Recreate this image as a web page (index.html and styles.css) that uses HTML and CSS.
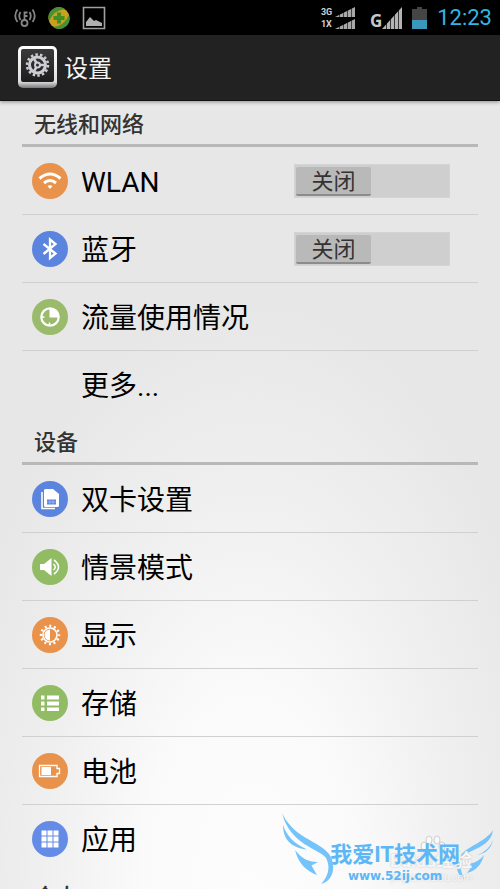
FILE: index.html
```html
<!DOCTYPE html>
<html lang="zh-CN">
<head>
<meta charset="utf-8">
<meta name="viewport" content="width=device-width, initial-scale=1">
<title>设置</title>
<link rel="stylesheet" href="styles.css">
</head>
<body>
<div class="status">
  <div class="status-group">
    <svg width="22" height="22" viewBox="0 0 22 22" fill="none" stroke="#858585" stroke-width="1.800"><circle cx="10.500" cy="16" r="3"/><path d="M10.500 13V5.500h3M10.500 9h3M6.500 5Q4 9 6.500 13M15.500 5Q18 9 15.500 13M3.500 2.500Q-1 9 3.500 15M18.500 2.500Q23 9 18.500 15"/></svg>
    <svg width="22" height="22" viewBox="0 0 22 22"><circle cx="11" cy="11" r="10.500" fill="#c9a11c"/><path d="M1 14A10.500 10.500 0 0 1 17 2Q6 3 1 14zM21 8A10.500 10.500 0 0 1 5 20Q16 19 21 8z" fill="#4a8f34"/><path d="M9 5.500h4V9h3.500v4H13v3.500H9V13H5.500V9H9z" fill="#3f8f25"/></svg>
    <svg width="24" height="24" viewBox="0 0 24 24"><path d="M1.500 1.500h21v21h-21z" fill="none" stroke="#a0a0a0" stroke-width="1.600"/><path d="M4 20v-4l4-5 4 4 2-1 6 3v3z" fill="#b0b0b0"/></svg>
  </div>
  <div class="status-group status-right">
    <div class="dual">
      <div class="net"><span>3G</span><svg width="20" height="10" viewBox="0 0 20 10"><path d="M0 10L20 0v10z" fill="#a8a8a8"/><path d="M4.500 0v10M8.500 0v10M12.500 0v10M16.500 0v10" stroke="#000" stroke-width=".6"/></svg></div>
      <div class="net"><span>1X</span><svg width="20" height="10" viewBox="0 0 20 10"><path d="M0 10L20 0v10z" fill="#a8a8a8"/><path d="M4.500 0v10M8.500 0v10M12.500 0v10M16.500 0v10" stroke="#000" stroke-width=".6"/></svg></div>
    </div>
    <div class="gsm"><span>G</span><svg width="20" height="22" viewBox="0 0 20 22"><path d="M0 22L20 0v22z" fill="#b4b4b4"/><path d="M4.500 0v22M8.500 0v22M12.500 0v22M16.500 0v22" stroke="#000" stroke-width=".7"/></svg></div>
    <svg width="15" height="22" viewBox="0 0 15 22"><path d="M5 0h5v2h5v20H0V2h5z" fill="#454545"/><path d="M0 13h15v9H0z" fill="#3a98bd"/></svg>
    <time class="clock">12:23</time>
  </div>
</div>
<header class="bar">
  <svg width="40" height="42" viewBox="0 0 40 42">
    <defs><linearGradient id="rim" x2="0" y2="1"><stop offset="0" stop-color="#fff"/><stop offset=".85" stop-color="#dedee0"/><stop offset="1" stop-color="#77777a"/></linearGradient><linearGradient id="face" x2="0" y2="1"><stop offset="0" stop-color="#3a3a3a"/><stop offset="1" stop-color="#1c1c1c"/></linearGradient></defs>
    <rect width="39" height="42" rx="5" fill="url(#rim)"/><rect x="3" y="3" width="33" height="33" rx="2" fill="url(#face)"/>
    <g transform="translate(19.500 19)" fill="none" stroke="#cdcdd3"><circle r="8" stroke-width="3"/><circle r="10.500" stroke-width="2.500" stroke-dasharray="2.500 2.200"/><circle r="2.500" stroke-width="2"/><path d="M2 0h6M-1 2l-3 5M-1-2l-3-5" stroke-width="2.500"/></g>
  </svg>
  <h1>设置</h1>
</header>
<main class="list">
  <section>
    <h2>无线和网络</h2>
    <ul>
      <li><svg class="ico orange" viewBox="0 0 36 36"><g fill="none" stroke="#fff" stroke-width="3"><path d="M7.500 15.500Q18 6.500 28.500 15.500M12 20Q18 15 24 20"/></g><path d="M15.500 23q2.500-1.500 5 0L18 26z" fill="#fff"/></svg><span class="name" id="wlan">WLAN</span><button class="switch" role="switch" aria-checked="false" aria-labelledby="wlan"><span>关闭</span></button></li>
      <li><svg class="ico blue" viewBox="0 0 36 36"><path d="M11.500 13L23.500 22.500 18 27V8.500l5.500 4.500L11.500 23" fill="none" stroke="#fff" stroke-width="2.300"/></svg><span class="name" id="bt">蓝牙</span><button class="switch" role="switch" aria-checked="false" aria-labelledby="bt"><span>关闭</span></button></li>
      <li><svg class="ico lime" viewBox="0 0 36 36"><circle cx="18" cy="18" r="8.700" fill="none" stroke="#fff" stroke-width="2.200"/><path d="M17.500 18.500V9.500a8.500 8.500 0 0 1 9 9z" fill="#fff"/><path d="M10 18h2.500M17.500 26v-2.500" stroke="#fff" stroke-width="1.500"/></svg><span class="name">流量使用情况</span></li>
      <li><span class="ico"></span><span class="name">更多...</span></li>
    </ul>
  </section>
  <section>
    <h2>设备</h2>
    <ul>
      <li><svg class="ico blue" viewBox="0 0 36 36"><path d="M10 11v16.500h13" fill="none" stroke="#fff" stroke-width="1.600"/><path d="M12 9.500q0-1.500 1.500-1.500H21l6 5v11.500q0 1.500-1.500 1.500h-12q-1.500 0-1.500-1.500z" fill="#fff"/><path d="M15 18.500h9v5h-9z" fill="#5b84df"/><path d="M15 21h9M18 18.500v5M21 18.500v5" stroke="#b9cbf4" stroke-width=".6"/></svg><span class="name">双卡设置</span></li>
      <li><svg class="ico green" viewBox="0 0 36 36"><path d="M8 15h4l7.500-6v18L12 21H8z" fill="#fff"/><path d="M21.500 15q3.500 3 0 6M22 11q9 7 0 14" fill="none" stroke="#fff" stroke-width="1.600"/></svg><span class="name">情景模式</span></li>
      <li><svg class="ico orange" viewBox="0 0 36 36"><circle cx="18" cy="18" r="7" fill="none" stroke="#fff" stroke-width="1.600"/><circle cx="18" cy="18" r="9" fill="none" stroke="#fff" stroke-width="2.500" stroke-dasharray="2 2.712" stroke-dashoffset="1"/><path d="M18 12.500a5.500 5.500 0 0 0 0 11z" fill="#fff"/></svg><span class="name">显示</span></li>
      <li><svg class="ico green" viewBox="0 0 36 36"><path d="M9 10.500h3.500v4H9zM15 10.500h12v4H15zM9 16.500h3.500v4H9zM15 16.500h12v4H15zM9 22.500h3.500v3.500H9zM15 22.500h12V26H15z" fill="#fff"/></svg><span class="name">存储</span></li>
      <li><svg class="ico orange" viewBox="0 0 36 36"><path d="M7.500 12.500h17.500v3h2.500v5H25v3H7.500z" fill="none" stroke="#fff" stroke-width="1.300"/><path d="M9.500 14h9.500v8H9.500z" fill="#fff"/></svg><span class="name">电池</span></li>
      <li><svg class="ico sky" viewBox="0 0 36 36"><path d="M9.500 9.500h5v5h-5zM15.500 9.500h5v5h-5zM21.500 9.500h5v5h-5zM9.500 15.500h5v5h-5zM15.500 15.500h5v5h-5zM21.500 15.500h5v5h-5zM9.500 21.500h5v5h-5zM15.500 21.500h5v5h-5zM21.500 21.500h5v5h-5z" fill="#fff"/></svg><span class="name">应用</span></li>
    </ul>
  </section>
  <section><h2>个人</h2></section>
</main>
<div class="mark">
  <div class="under">
    <svg width="26" height="16" viewBox="0 0 26 16" fill="#fafafa" stroke="#cfcfcf"><ellipse cx="4" cy="11" rx="3" ry="4"/><ellipse cx="9" cy="5" rx="3" ry="4"/><ellipse cx="17" cy="5" rx="3" ry="4"/><ellipse cx="22" cy="11" rx="3" ry="4"/></svg>
    <b>Baidu经验</b><i>jingyan.baidu.com</i>
  </div>
  <svg width="52" height="72" viewBox="0 0 52 72"><path d="M0 0C4 9 12 18 24 25C36 32 50 38 51 51C52 60 49 68 39 71C46 64 49 54 44 45C38 36 8 32 0 0zM1 12C5 24 13 31 25 36.500C12 35 1 29 1 12zM13 37C20 46 27 49 36 49L29.500 52.500L35 62C25 58 17 52 13 37z" fill="#74c4fb"/></svg>
  <div class="mark-text"><strong>我爱IT技术网</strong><span>www.52ij.com</span></div>
  <svg class="wing-right" width="38" height="50" viewBox="0 0 38 50"><path d="M37 0C30 12 8 17 2 29C-1 38 2 46 9 50C5 43 3 36 6 28C12 19 35 18 37 0zM37 10Q33 21 21 25Q34 23 37 10zM28 25Q23 32 13 34L16 36L11 43Q24 40 28 25z" fill="#74c4fb"/></svg>
</div>
</body>
</html>
```
FILE: styles.css
```css
* { box-sizing: border-box; }
body {
  margin: 0;
  height: 100vh;
  display: flex;
  flex-direction: column;
  overflow: hidden;
  font-family: Roboto, "Noto Sans CJK SC", sans-serif;
  color: #000;
  background: #e8e8e8;
}
svg { display: block; flex: none; }
h1, h2, ul { margin: 0; padding: 0; font-weight: 400; }
.status {
  flex: none;
  display: flex;
  justify-content: space-between;
  height: 35px;
  padding: 0 8px 0 14px;
  background: #000;
}
.status-group { display: flex; align-items: center; gap: 12px; }
.status-right { gap: 10px; }
.dual { display: grid; gap: 2px; margin-right: 5px; }
.net { display: flex; align-items: center; gap: 2px; height: 10px; font: 700 9px/10px Roboto, sans-serif; color: #d0d0d0; }
.net span { width: 12px; }
.gsm { display: flex; align-items: flex-end; font: 700 17px/17px "Open Sans", sans-serif; color: #c8c8c8; }
.clock { font-size: 22px; line-height: 36px; padding-top: 1px; color: #33b5e5; }
.bar {
  flex: none;
  display: flex;
  align-items: center;
  gap: 6px;
  height: 66px;
  padding: 0 18px 2px;
  background: #222;
  border-bottom: 1px solid #111;
  box-shadow: 0 1px 4px rgba(0, 0, 0, .4);
  position: relative;
}
h1 { padding-top: 4px; font-size: 24px; line-height: 36px; color: #f3f3f3; }
.list {
  flex: 1;
  min-height: 0;
  overflow: hidden;
  padding: 0 22px;
  background: radial-gradient(ellipse 62% 75% at 50% 100%, #fdfdfd 0%, #fafafa 35%, #f0f0f0 65%, #e7e7e7 100%);
}
h2 {
  height: 46px;
  padding-left: 12px;
  border-bottom: 3px solid #b8b8b8;
  font-size: 22px;
  line-height: 48px;
  font-weight: 500;
  color: #333;
}
ul { list-style: none; }
li {
  display: flex;
  align-items: center;
  height: 68px;
  padding: 0 28px 0 10px;
  border-bottom: 1px solid #d0d0d0;
}
li:last-child { border-bottom-color: transparent; }
.ico { width: 36px; height: 36px; flex: none; border-radius: 50%; }
.orange { background: #e8924b; }
.blue { background: #5b84df; }
.sky { background: #648be6; }
.lime { background: #9aba6c; }
.green { background: #91bc64; }
.name { flex: 1; margin-left: 13px; padding-top: 4px; font-size: 28px; line-height: 40px; }
.switch {
  width: 156px;
  height: 34px;
  padding: 2px 1px;
  border: 1px solid #d4d4d4;
  background: #cfcfcf;
  font: inherit;
}
.switch span {
  display: block;
  width: 75px;
  height: 29px;
  border-radius: 2px;
  border-bottom: 2px solid #8c8c8c;
  background: #b9b9b9;
  font-size: 22px;
  line-height: 30px;
  color: #333;
}
.mark {
  position: absolute;
  right: 6px;
  bottom: 4px;
  display: flex;
  align-items: flex-end;
}
.mark-text {
  margin: 0 -4px;
  color: #5db7f7;
  text-align: center;
  position: relative;
  z-index: 1;
}
.mark-text strong { display: block; font-size: 22px; line-height: 28px; white-space: nowrap; }
.mark-text span { display: block; padding-bottom: 2px; font: 700 12px/14px "DejaVu Sans", sans-serif; }
.wing-right { margin-bottom: 5px; }
.under {
  position: absolute;
  right: 22px;
  bottom: 0;
  color: #f6f6f6;
  text-shadow: 0 0 2px #c4c4c4;
  text-align: right;
}
.under svg { margin-left: 30px; }
.under b { display: block; font-size: 18px; line-height: 20px; }
.under i { display: block; font-size: 10px; line-height: 14px; font-style: normal; }
```
